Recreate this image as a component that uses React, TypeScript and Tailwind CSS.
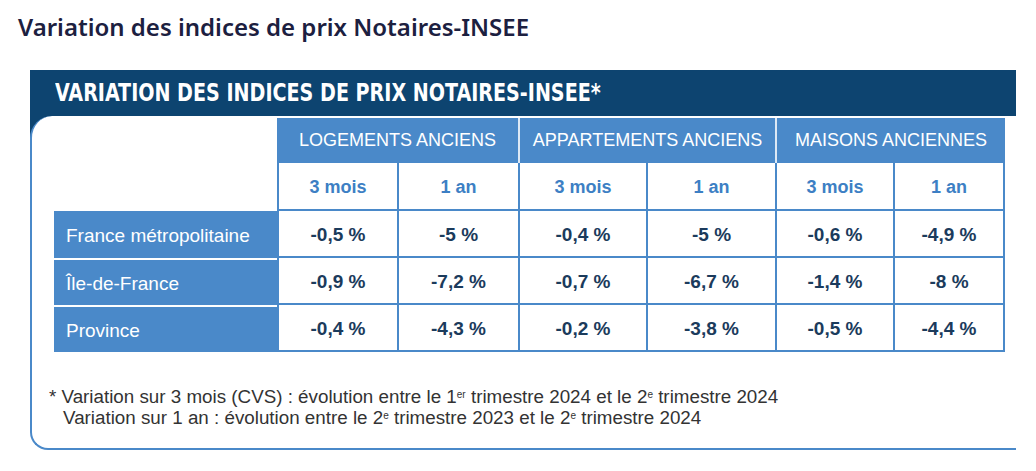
import React from "react";

const groups = ["LOGEMENTS ANCIENS", "APPARTEMENTS ANCIENS", "MAISONS ANCIENNES"];

const rows = [
  { label: "France métropolitaine", values: ["-0,5 %", "-5 %", "-0,4 %", "-5 %", "-0,6 %", "-4,9 %"] },
  { label: "Île-de-France", values: ["-0,9 %", "-7,2 %", "-0,7 %", "-6,7 %", "-1,4 %", "-8 %"] },
  { label: "Province", values: ["-0,4 %", "-4,3 %", "-0,2 %", "-3,8 %", "-0,5 %", "-4,4 %"] },
];

const sub = ["3 mois", "1 an", "3 mois", "1 an", "3 mois", "1 an"];

export default function App() {
  return (
    <div className="w-[1036px] h-[471px] bg-white overflow-hidden">
      {/* Page title */}
      <h1 className="pl-[18px] pt-[11px] h-[70px] text-[24px] leading-[32px] font-semibold text-[#1c2040] font-['Noto_Sans',sans-serif]">
        Variation des indices de prix Notaires-INSEE
      </h1>

      <div className="ml-[30px] w-[986px]">
        {/* Dark title bar */}
        <div className="h-[46px] bg-[#0d4470] pl-[25px] flex items-center">
          <span className="block origin-left scale-x-[0.885] whitespace-nowrap text-white font-bold text-[24px] font-['DejaVu_Sans_Condensed','DejaVu_Sans',sans-serif]">
            VARIATION DES INDICES DE PRIX NOTAIRES-INSEE*
          </span>
        </div>

        {/* Card */}
        <div className="bg-[linear-gradient(#0d4470_24px,transparent_24px)]">
          <div className="bg-white rounded-tl-[22px] rounded-bl-[18px] border-l-2 border-b-2 border-[#4a89c9] pl-[22px] pt-[2px] pb-[20px] font-['Liberation_Sans',Arial,sans-serif]">
            <div className="grid grid-cols-[223px_120px_121px_128px_129px_118px_112px]">
              <div className="row-span-2" />
              {groups.map((g, i) => (
                <div
                  key={g}
                  className={`col-span-2 h-[45px] bg-[#4a89c9] text-white text-[18px] flex items-center justify-center ${
                    i > 0 ? "border-l-2 border-[#dce8f5]" : ""
                  }`}
                >
                  {g}
                </div>
              ))}
              {sub.map((s, i) => (
                <div
                  key={i}
                  className={`h-[48px] pt-[3px] border-l-2 border-b-2 border-[#4a89c9] flex items-center justify-center text-[18px] font-bold text-[#3d7fc4] ${
                    i === 5 ? "border-r-2" : ""
                  }`}
                >
                  {s}
                </div>
              ))}
              {rows.map((r, ri) => (
                <React.Fragment key={r.label}>
                  <div
                    className={`h-[47px] pt-[3px] bg-[#4a89c9] text-white text-[19px] flex items-center pl-[12px] ${
                      ri > 0 ? "border-t-2 border-white" : ""
                    }`}
                  >
                    {r.label}
                  </div>
                  {r.values.map((v, vi) => (
                    <div
                      key={vi}
                      className={`h-[47px] pt-[3px] border-l-2 border-b-2 border-[#4a89c9] flex items-center justify-center text-[19px] font-bold text-[#1b3b5c] ${
                        vi === 5 ? "border-r-2" : ""
                      }`}
                    >
                      {v}
                    </div>
                  ))}
                </React.Fragment>
              ))}
            </div>

            {/* Footnote */}
            <div className="mt-[34px] -ml-[5px] text-[18.8px] leading-[21px] text-[#333333] font-['Liberation_Sans',Arial,sans-serif] whitespace-nowrap">
              <p>
                * Variation sur 3 mois (CVS) : évolution entre le 1<sup className="text-[10px]">er</sup> trimestre 2024 et le 2
                <sup className="text-[10px]">e</sup> trimestre 2024
              </p>
              <p className="pl-[14px]">
                Variation sur 1 an : évolution entre le 2<sup className="text-[10px]">e</sup> trimestre 2023 et le 2
                <sup className="text-[10px]">e</sup> trimestre 2024
              </p>
            </div>
          </div>
        </div>
      </div>
    </div>
  );
}
